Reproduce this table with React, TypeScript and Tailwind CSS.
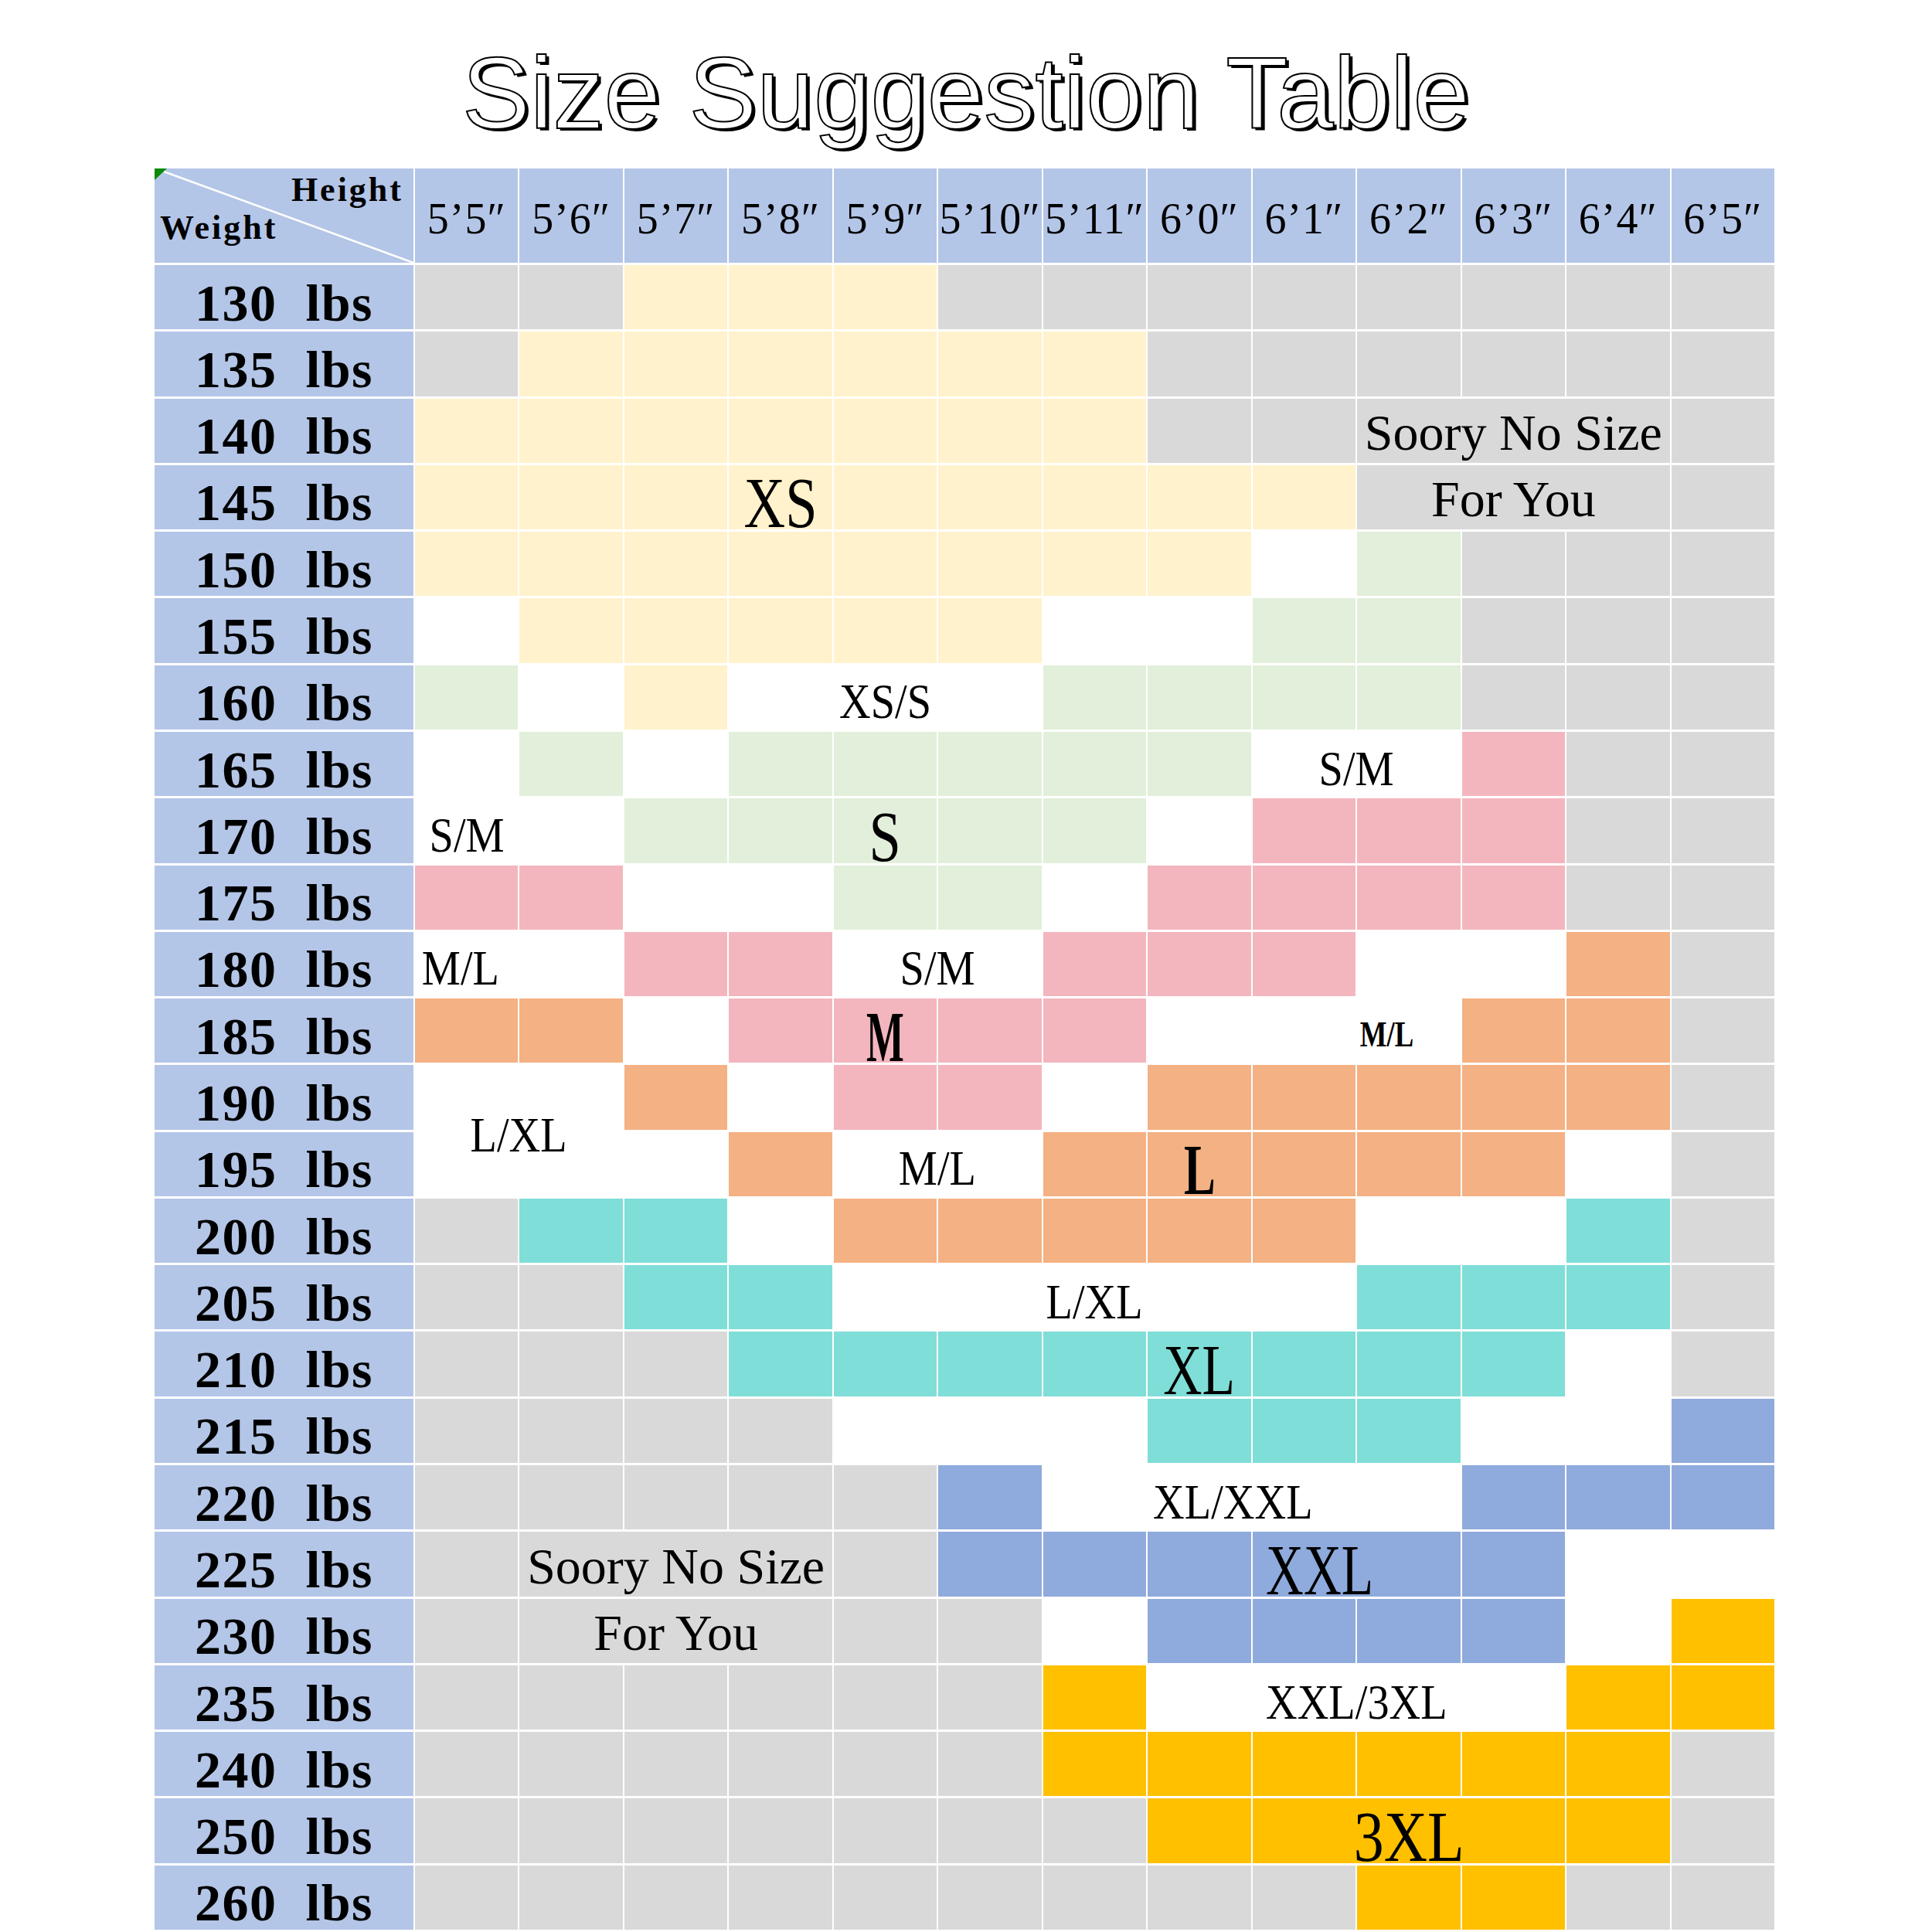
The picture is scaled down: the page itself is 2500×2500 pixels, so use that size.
import clsx from "clsx";

type Cell = {
  c: string;
  span?: number;
  tall?: boolean;
  label?: string;
  k?: string;
  box?: string;
};

const fill: Record<string, string> = {
  G: "bg-[#d9d9d9]",
  Y: "bg-[#fff2cc]",
  N: "bg-[#e2efda]",
  W: "bg-white",
  P: "bg-[#f4b6be]",
  O: "bg-[#f4b183]",
  T: "bg-[#7fded7]",
  B: "bg-[#8faadc]",
  A: "bg-[#ffc000]",
};

const spans: Record<number, string> = {
  1: "",
  2: "col-span-2",
  3: "col-span-3",
  4: "col-span-4",
  5: "col-span-5",
};

// label styles
const MID = "text-[64px] scale-x-[0.88] translate-y-[6px]";
const SORRY = "text-[66px] translate-y-[3px]";
const BIG = "text-[94px] translate-y-[7px]";

const s = (str: string): Cell[] => str.split("").map((c) => ({ c }));

const heights = [
  "5’5″", "5’6″", "5’7″", "5’8″", "5’9″", "5’10″", "5’11″",
  "6’0″", "6’1″", "6’2″", "6’3″", "6’4″", "6’5″",
];

const rows: { w: number; cells: Cell[] }[] = [
  { w: 130, cells: s("GGYYYGGGGGGGG") },
  { w: 135, cells: s("GYYYYYYGGGGGG") },
  {
    w: 140,
    cells: [...s("YYYYYYYGG"), { c: "G", span: 3, label: "Soory No Size", k: SORRY }, ...s("G")],
  },
  {
    w: 145,
    cells: [
      ...s("YYY"),
      { c: "Y", label: "XS", k: `${BIG} scale-x-[0.79]` },
      ...s("YYYYY"),
      { c: "G", span: 3, label: "For You", k: SORRY },
      ...s("G"),
    ],
  },
  { w: 150, cells: s("YYYYYYYYWNGGG") },
  { w: 155, cells: s("WYYYYYWWNNGGG") },
  {
    w: 160,
    cells: [...s("NWY"), { c: "W", span: 3, label: "XS/S", k: MID }, ...s("NNNNGGG")],
  },
  {
    w: 165,
    cells: [...s("WNWNNNNN"), { c: "W", span: 2, label: "S/M", k: MID }, ...s("PGG")],
  },
  {
    w: 170,
    cells: [
      { c: "W", label: "S/M", k: MID },
      ...s("WNN"),
      { c: "N", label: "S", k: `${BIG} scale-x-[0.79]` },
      ...s("NNWPPPGG"),
    ],
  },
  { w: 175, cells: s("PPWWNNWPPPPGG") },
  {
    w: 180,
    cells: [
      { c: "W", label: "M/L", k: `${MID} -translate-x-[8px]` },
      ...s("WPP"),
      { c: "W", span: 2, label: "S/M", k: MID },
      ...s("PPPWWOG"),
    ],
  },
  {
    w: 185,
    cells: [
      ...s("OOWP"),
      { c: "P", label: "M", k: `${BIG} font-bold scale-x-[0.55]` },
      ...s("PP"),
      {
        c: "W",
        span: 3,
        label: "M/L",
        k: "text-[46px] font-bold scale-x-[0.8] translate-y-[5px]",
        box: "justify-end pr-[52px]",
      },
      ...s("OOG"),
    ],
  },
  {
    w: 190,
    cells: [{ c: "W", span: 2, tall: true, label: "L/XL", k: MID }, ...s("OWPPWOOOOOG")],
  },
  {
    w: 195,
    cells: [
      ...s("WO"),
      { c: "W", span: 2, label: "M/L", k: MID },
      ...s("O"),
      { c: "O", label: "L", k: `${BIG} font-bold scale-x-[0.65]` },
      ...s("OOOWG"),
    ],
  },
  { w: 200, cells: s("GTTWOOOOOWWTG") },
  {
    w: 205,
    cells: [...s("GGTT"), { c: "W", span: 5, label: "L/XL", k: MID }, ...s("TTTG")],
  },
  {
    w: 210,
    cells: [...s("GGGTTTT"), { c: "T", label: "XL", k: `${BIG} scale-x-[0.74]` }, ...s("TTTWG")],
  },
  { w: 215, cells: s("GGGGWWWTTTWWB") },
  {
    w: 220,
    cells: [
      ...s("GGGGGB"),
      { c: "W", span: 4, label: "XL/XXL", k: `${MID} -translate-x-[24px]` },
      ...s("BBB"),
    ],
  },
  {
    w: 225,
    cells: [
      ...s("G"),
      { c: "G", span: 3, label: "Soory No Size", k: SORRY },
      ...s("GBBB"),
      { c: "B", span: 2, label: "XXL", k: `${BIG} scale-x-[0.72] -translate-x-[48px]` },
      ...s("BWW"),
    ],
  },
  {
    w: 230,
    cells: [...s("G"), { c: "G", span: 3, label: "For You", k: SORRY }, ...s("GGWBBBBWA")],
  },
  {
    w: 235,
    cells: [...s("GGGGGGA"), { c: "W", span: 4, label: "XXL/3XL", k: MID }, ...s("AA")],
  },
  { w: 240, cells: s("GGGGGGAAAAAAG") },
  {
    w: 250,
    cells: [...s("GGGGGGGA"), { c: "A", span: 3, label: "3XL", k: `${BIG} scale-x-[0.83]` }, ...s("AG")],
  },
  { w: 260, cells: s("GGGGGGGGGAAGG") },
];

function GridCell({ cell }: { cell: Cell }) {
  return (
    <div
      className={clsx(
        "flex items-center justify-center",
        fill[cell.c],
        spans[cell.span ?? 1],
        cell.tall && "row-span-2",
        cell.box
      )}
    >
      {cell.label && (
        <span className={clsx("relative z-10 inline-block whitespace-pre leading-none", cell.k)}>
          {cell.label}
        </span>
      )}
    </div>
  );
}

export default function App() {
  return (
    <div className="flex h-[2500px] w-[2500px] flex-col items-center bg-white font-['Liberation_Serif',serif] text-black">
      <h1 className="pt-[55px] font-['Liberation_Sans',Arial,sans-serif] text-[132px] leading-none font-normal text-white [-webkit-text-stroke:2px_#000] [text-shadow:4px_3px_0_#000]">
        Size Suggestion Table
      </h1>

      <div className="-ml-[4px] mt-[31px] grid h-[2279px] w-[2096px] grid-cols-[335px_repeat(13,minmax(0,1fr))] grid-rows-[122px_repeat(25,minmax(0,1fr))] gap-x-[2px] gap-y-[3px] bg-white">
        {/* corner */}
        <div className="relative flex flex-col bg-[#b4c6e7] pt-[6px]">
          <svg className="absolute inset-0 h-full w-full" viewBox="0 0 335 122" preserveAspectRatio="none">
            <line x1="12" y1="4" x2="335" y2="122" stroke="#fff" strokeWidth="2.5" />
          </svg>
          <svg className="absolute left-0 top-0" width="16" height="15" viewBox="0 0 16 15">
            <path d="M0 0H16L0 15Z" fill="#0a8a0a" />
          </svg>
          <span className="relative self-end pr-[13px] text-[44px] font-bold leading-none tracking-[3px]">
            Height
          </span>
          <span className="relative mt-[5px] self-start pl-[7px] text-[44px] font-bold leading-none tracking-[3px]">
            Weight
          </span>
        </div>

        {heights.map((h) => (
          <div key={h} className="flex items-center justify-center bg-[#b4c6e7]">
            <span className="translate-y-[4px] whitespace-pre text-[56px] leading-none tracking-[1px]">{h}</span>
          </div>
        ))}

        {rows.map((r) => [
          <div key={`w${r.w}`} className="flex items-center justify-center bg-[#b4c6e7]">
            <span className="translate-y-[7px] whitespace-pre text-[68px] font-bold leading-none tracking-[1.5px]">
              {`${r.w}  lbs`}
            </span>
          </div>,
          ...r.cells.map((cell, i) => <GridCell key={`${r.w}-${i}`} cell={cell} />),
        ])}
      </div>
    </div>
  );
}
